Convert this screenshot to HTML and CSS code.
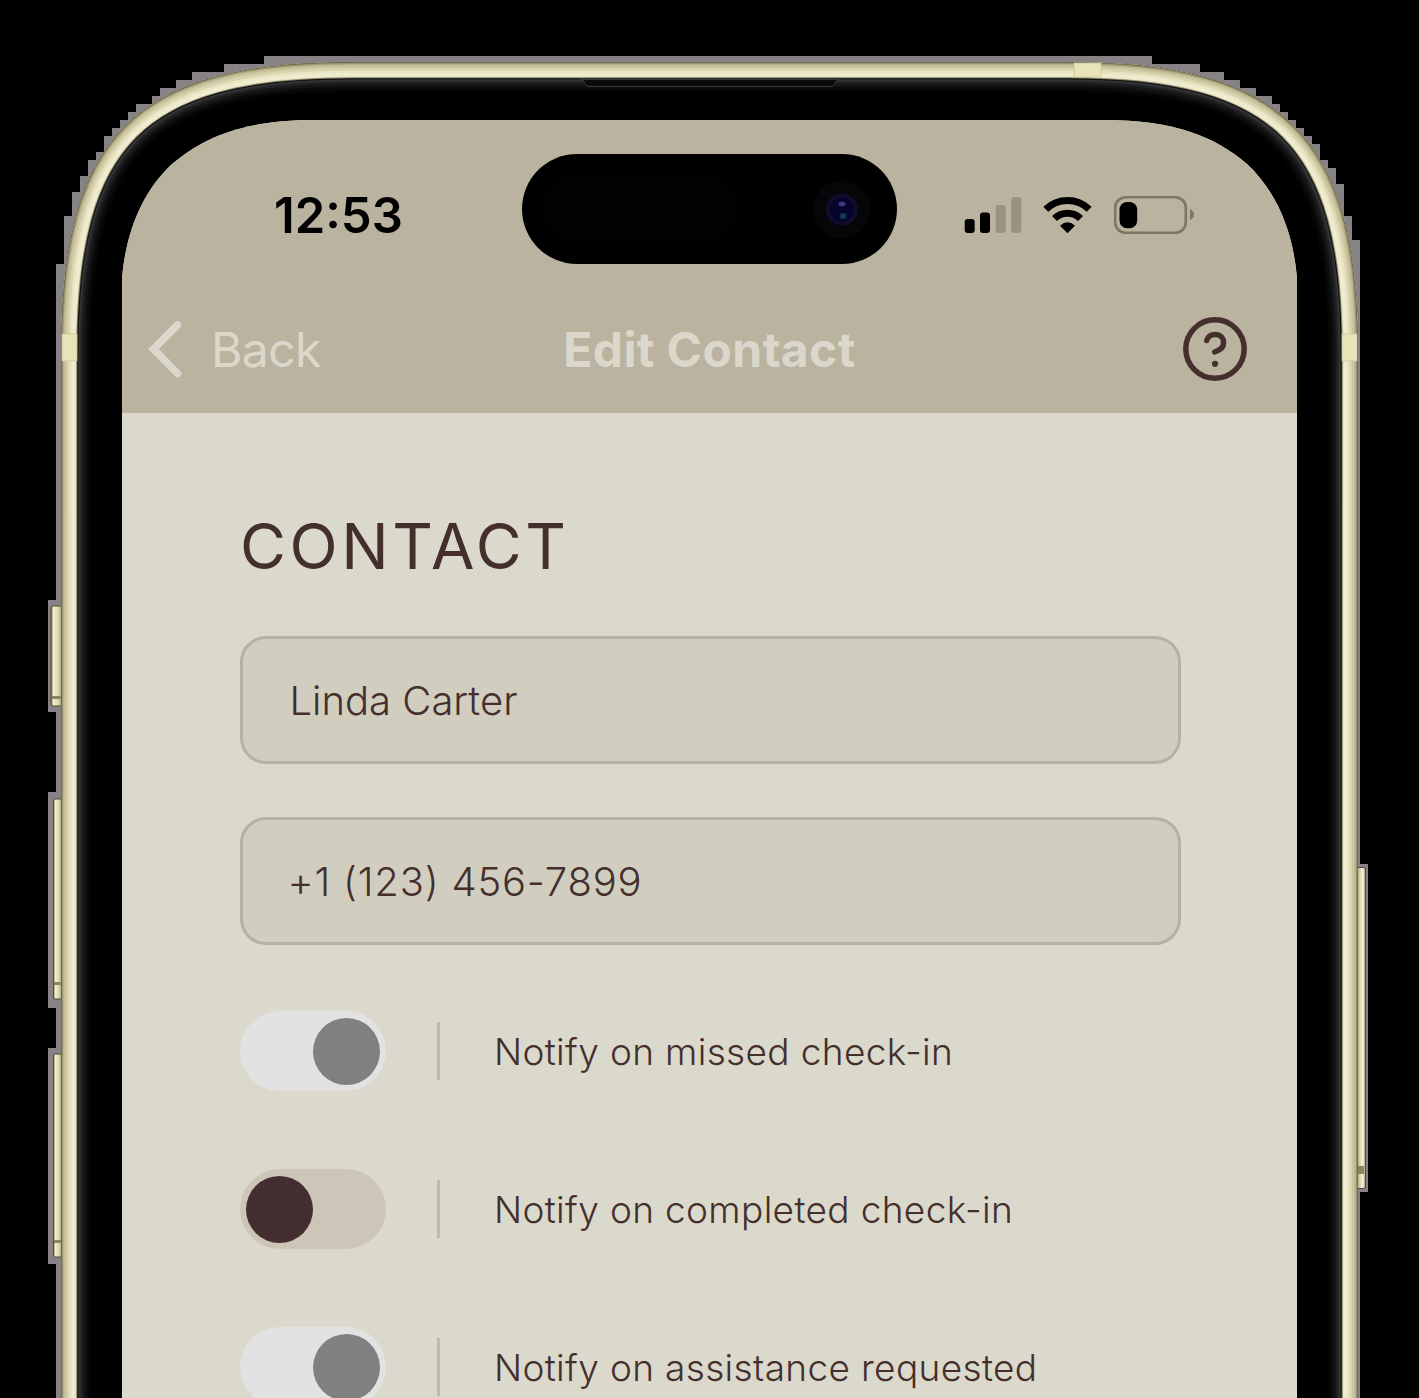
FILE: index.html
```html
<!DOCTYPE html>
<html lang="en">
<head>
<meta charset="utf-8">
<title>Edit Contact</title>
<link rel="stylesheet" href="styles.css">
</head>
<body>
<svg class="device" viewBox="0 0 1419 1398" aria-hidden="true">
  <defs>
    <path id="shell" d="M61 1500V352C61 136 135 62 351 62H1068C1284 62 1358 136 1358 352V1500Z"/>
    <clipPath id="inside"><use href="#shell"/></clipPath>
    <linearGradient id="key" x1="0" x2="1"><stop offset="0" stop-color="#77734f"/><stop offset=".2" stop-color="#f3efd0"/><stop offset=".6" stop-color="#dcd8af"/><stop offset="1" stop-color="#8d8963"/></linearGradient>
    <linearGradient id="keyRight" x1="0" x2="1"><stop offset="0" stop-color="#8d8963"/><stop offset=".25" stop-color="#cdc8a0"/><stop offset=".65" stop-color="#f3efd5"/><stop offset=".85" stop-color="#d8d4b2"/><stop offset="1" stop-color="#55523c"/></linearGradient>
  </defs>
  <path class="halo" d="M56 1398V1264H48V1048H56V1008H48V792H56V712H48V600H56V264H64V216H72V192H80V176H88V160H96V152H104V136H112V128H120V120H128V112H136V104H152V96H160V88H176V80H192V72H224V64H264V56H1152V64H1200V72H1224V80H1240V88H1256V96H1272V104H1280V112H1288V120H1296V128H1304V136H1312V144H1320V160H1328V168H1336V184H1344V216H1352V240H1360V864H1368V1192H1360V1398Z"/>
  <g stroke="#4f4c38">
    <rect x="51" y="606" width="12" height="100" rx="2" fill="url(#key)"/>
    <rect x="53.500" y="799" width="9" height="200" rx="2" fill="url(#key)"/>
    <rect x="53.500" y="1054" width="9" height="203" rx="2" fill="url(#key)"/>
    <rect x="1357" y="867.500" width="8.500" height="321" rx="2" fill="url(#keyRight)"/>
  </g>
  <g fill="#8a8662"><rect x="52" y="696" width="9" height="3"/><rect x="54" y="982" width="7" height="3"/><rect x="54" y="1240" width="7" height="3"/><rect x="1358" y="1166" width="6" height="8"/></g>
  <use href="#shell" fill="#000"/>
  <g clip-path="url(#inside)" fill="none">
    <use href="#shell" stroke="#050505" stroke-width="60"/>
    <use href="#shell" stroke="#0c0c0d" stroke-width="54"/>
    <use href="#shell" stroke="#151516" stroke-width="49"/>
    <use href="#shell" stroke="#202022" stroke-width="44"/>
    <use href="#shell" stroke="#2c2c2f" stroke-width="40"/>
    <use href="#shell" stroke="#3a3a3d" stroke-width="37"/>
    <use href="#shell" stroke="#12120e" stroke-width="35"/>
    <use href="#shell" stroke="#85836a" stroke-width="32.500"/>
    <use href="#shell" stroke="#eae5c7" stroke-width="30.500"/>
    <use href="#shell" stroke="#f0ecd0" stroke-width="28"/>
    <use href="#shell" stroke="#e8e4c4" stroke-width="22"/>
    <use href="#shell" stroke="#dad5b1" stroke-width="17"/>
    <use href="#shell" stroke="#cbc6a0" stroke-width="12"/>
    <use href="#shell" stroke="#b8b38d" stroke-width="7"/>
    <use href="#shell" stroke="#98946f" stroke-width="4"/>
    <use href="#shell" stroke="#68654d" stroke-width="1.600"/>
  </g>
  <g fill="#e9e3ba" stroke="#c7c299" stroke-width=".7"><rect x="62" y="334" width="15" height="27"/><rect x="1342" y="334" width="15" height="27"/><rect x="1074" y="63" width="27" height="14"/></g>
  <path d="M581 79.500Q584 80 585 84Q586 86.500 589 86.500H831Q834 86.500 835 84Q836 80 839 79.500Z" fill="#0b0b0c" stroke="#3a393a"/>
</svg>

<main class="screen">
  <header class="topbar">
    <div class="status">
      <span class="time">12:53</span>
      <svg class="indicators" width="230" height="40" viewBox="964 195 230 40" aria-label="Signal, Wi-Fi, battery">
        <rect x="964.700" y="219" width="10" height="14" rx="3"/>
        <rect x="980" y="212.500" width="10" height="20.500" rx="3"/>
        <g fill="#989280"><rect x="995.700" y="205" width="10" height="28" rx="3"/><rect x="1011.200" y="197" width="10" height="36" rx="3"/></g>
        <path d="M1045.800 209.200A31.400 31.400 0 0 1 1089.200 209.200M1054.500 218.600A18.500 18.500 0 0 1 1080.500 218.600" fill="none" stroke="#000" stroke-width="7"/>
        <path d="M1060 225.700Q1067.500 219 1075 225.700L1067.500 233.200Z"/>
        <rect x="1115.200" y="197.200" width="70.600" height="35.600" rx="10.500" fill="none" stroke="#7d7765" stroke-width="2.600"/>
        <rect x="1119.500" y="202" width="17.700" height="26.300" rx="7.500"/>
        <path d="M1190 209Q1194 211 1194 214.500T1190 220Z" fill="#7d7765"/>
      </svg>
    </div>
    <div class="island">
      <svg width="375" height="110" viewBox="0 0 375 110" aria-hidden="true">
        <rect x="20" y="22" width="194" height="64" rx="32" fill="#020202"/>
        <circle cx="320" cy="55.500" r="29" fill="#060507"/>
        <circle cx="320" cy="55.500" r="16" fill="#100d2c"/>
        <circle cx="320" cy="55.500" r="12" fill="#04042c"/>
        <ellipse cx="320" cy="50" rx="3.500" ry="2.500" fill="#3b3984"/>
        <ellipse cx="321" cy="62" rx="3.500" ry="3" fill="#0d3a50"/>
      </svg>
    </div>
    <nav class="nav">
      <a class="back"><svg width="34" height="58" viewBox="0 0 34 58" aria-hidden="true"><path d="M29.500 5L5.500 29L29.500 53.500" fill="none" stroke="currentColor" stroke-width="7.500" stroke-linecap="round" stroke-linejoin="miter"/></svg><span class="back-label">Back</span></a>
      <h1 class="title">Edit Contact</h1>
      <svg class="help" width="64" height="64" viewBox="0 0 64 64" aria-label="Help"><g fill="none" stroke="#452f2d" stroke-width="5.500" stroke-linecap="round"><circle cx="32" cy="32" r="29.200"/><path d="M23.700 23.500C24.500 19.500 28 17.500 32 17.500C37 17.500 40.600 21 40.600 25.700C40.600 31 36 33.500 31.800 35"/></g><circle cx="32" cy="46.800" r="3.100" fill="#452f2d"/></svg>
    </nav>
  </header>
  <section class="content">
    <h2 class="heading">CONTACT</h2>
    <div class="field">Linda Carter</div>
    <div class="field phone">+1 (123) 456-7899</div>
    <div class="options">
      <div class="option"><span class="toggle on"><i class="knob"></i></span><span class="rule"></span><span class="label">Notify on missed check-in</span></div>
      <div class="option"><span class="toggle"><i class="knob"></i></span><span class="rule"></span><span class="label">Notify on completed check-in</span></div>
      <div class="option"><span class="toggle on"><i class="knob"></i></span><span class="rule"></span><span class="label">Notify on assistance requested</span></div>
    </div>
  </section>
</main>
</body>
</html>
```
FILE: styles.css
```css
* { box-sizing: border-box; }
body {
  margin: 0;
  width: 1419px;
  height: 1398px;
  overflow: hidden;
  background: #000;
  color: #452f2d;
  font-family: Inter, "Liberation Sans", sans-serif;
}
.device { position: absolute; left: 0; top: 0; width: 1419px; height: 1398px; }
.halo { fill: #878285; shape-rendering: crispEdges; }
.screen {
  position: relative;
  display: flex;
  flex-direction: column;
  width: 1175px;
  height: 1278px;
  margin: 120px 0 0 122px;
  overflow: hidden;
  background: #dbd9cc;
  clip-path: path("M0 1278V158C4 112 20 72 50 44C82 17 121 0 194 0H981C1054 0 1093 17 1125 44C1155 72 1171 112 1175 158V1278Z");
}
.topbar { flex: none; height: 293px; background: #bab39f; }
.status {
  display: flex;
  align-items: center;
  justify-content: space-between;
  height: 165px;
  padding: 25px 103px 0 152px;
}
.time { padding-top: 2px; font-size: 49px; font-weight: 600; line-height: 58px; color: #000; }
.indicators { display: block; }
.island {
  position: absolute;
  left: 400px;
  top: 34px;
  width: 375px;
  height: 110px;
  border-radius: 55px;
  background: #000;
}
.nav {
  display: grid;
  grid-template-columns: 1fr auto 1fr;
  align-items: center;
  height: 128px;
  padding: 0 26px;
  color: #dbd8cb;
}
.back { display: flex; align-items: center; gap: 29px; font-size: 48px; line-height: 58px; }
.back-label { padding-top: 2px; letter-spacing: -.6px; }
.title { margin: 0; padding-top: 2px; font-size: 48px; font-weight: 700; line-height: 58px; letter-spacing: .4px; }
.help { justify-self: end; margin-right: 24px; }
.content { padding: 94px 116px 0 118px; }
.heading { margin: 0 0 51px; font-size: 63px; font-weight: 400; line-height: 78px; letter-spacing: 3.5px; }
.field {
  display: flex;
  align-items: center;
  height: 128px;
  margin-bottom: 53px;
  padding-left: 46.5px;
  border: 3px solid #b5b2a0;
  border-radius: 26px;
  background: #d1cec0;
  font-size: 40px;
  font-weight: 300;
}
.phone { padding-left: 44.5px; letter-spacing: .8px; }
.options { display: flex; flex-direction: column; gap: 78px; padding-top: 13px; }
.option { display: flex; align-items: center; height: 80px; }
.toggle { display: flex; width: 146px; height: 80px; padding: 6.5px 6px; border-radius: 40px; background: #cdc6b8; }
.toggle.on { justify-content: flex-end; background: #e2e2e2; }
.knob { width: 67px; height: 67px; border-radius: 50%; background: #452e2f; }
.on .knob { background: #808080; }
.rule { width: 3px; height: 58px; margin: 0 54px 0 51px; background: #bfbbaa; }
.label { padding-top: 1px; font-size: 37px; font-weight: 300; letter-spacing: .35px; white-space: nowrap; }
```
